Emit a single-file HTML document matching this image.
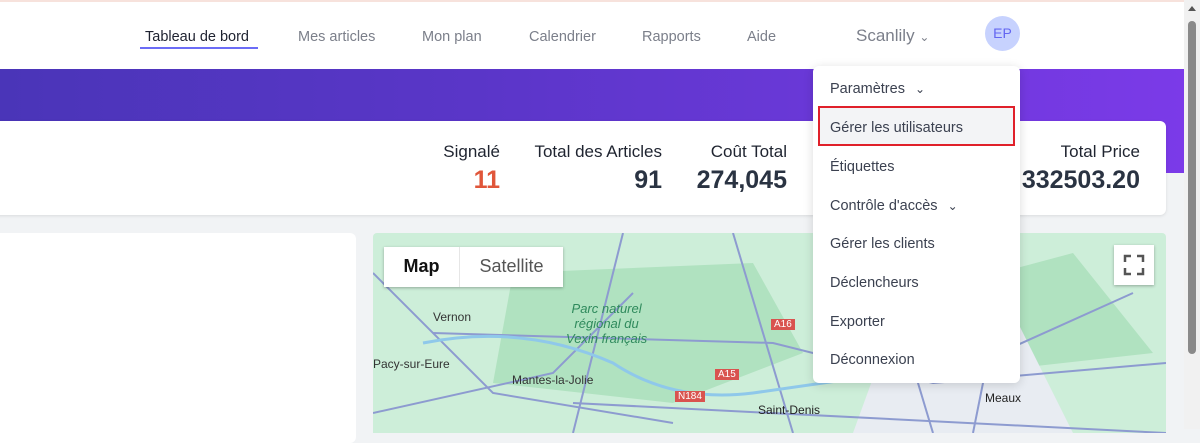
<!DOCTYPE html>
<html><head><meta charset="utf-8"><style>
*{margin:0;padding:0;box-sizing:border-box}
body{width:1200px;height:429px;overflow:hidden;background:#f1f3f5;font-family:"Liberation Sans",sans-serif;position:relative}
.top{position:absolute;left:0;top:0;width:1184px;height:69px;background:#fff;border-top:2px solid #f7e2dc}
.nav{position:absolute;top:27px;font-size:14.5px;color:#7b7f8a}
.banner{position:absolute;left:0;top:69px;width:1184px;height:104px;background:linear-gradient(90deg,#4a35b8,#5a36c8 40%,#7b3ae8)}
.card{position:absolute;background:#fff;border-radius:6px}
.lbl{position:absolute;font-size:17px;color:#1f2430;text-align:right}
.val{position:absolute;font-size:25px;font-weight:bold;color:#2a3342;text-align:right}
.dd{position:absolute;left:813px;top:66px;width:207px;height:317px;background:#fff;border-radius:6px;box-shadow:0 2px 10px rgba(0,0,0,.15)}
.it{position:absolute;left:17px;font-size:14.5px;color:#3b4150}
.scroll{position:absolute;left:1184px;top:0;width:16px;height:429px;background:#f1f1f1}
</style></head><body>
<div class="top">
<div class="nav" style="left:145px;color:#1e2230">Tableau de bord</div>
<div style="position:absolute;left:140px;top:45px;width:118px;height:2px;background:#6b6cf6"></div>
<div class="nav" style="left:298px">Mes articles</div>
<div class="nav" style="left:422px">Mon plan</div>
<div class="nav" style="left:529px">Calendrier</div>
<div class="nav" style="left:642px">Rapports</div>
<div class="nav" style="left:747px">Aide</div>
<div class="nav" style="left:856px;top:24px;font-size:17px">Scanlily <span style="font-size:12px">&#8964;</span></div>
<div style="position:absolute;left:985px;top:14px;width:35px;height:35px;border-radius:50%;background:#c7d2fe;color:#6366f1;font-size:14px;text-align:center;line-height:35px">EP</div>
</div>
<div class="banner"></div>
<div class="card" style="left:-6px;top:121px;width:1172px;height:94px;box-shadow:0 1px 3px rgba(0,0,0,.1)"></div>
<div class="lbl" style="left:400px;width:100px;top:142px">Signalé</div>
<div class="val" style="left:400px;width:100px;top:166px;color:#e0563a">11</div>
<div class="lbl" style="left:500px;width:162px;top:142px">Total des Articles</div>
<div class="val" style="left:500px;width:162px;top:166px">91</div>
<div class="lbl" style="left:660px;width:127px;top:142px">Coût Total</div>
<div class="val" style="left:660px;width:127px;top:166px">274,045</div>
<div class="lbl" style="left:980px;width:160px;top:142px">Total Price</div>
<div class="val" style="left:980px;width:160px;top:166px">332503.20</div>
<div class="card" style="left:-6px;top:233px;width:362px;height:210px"></div>
<div style="position:absolute;left:373px;top:233px;width:793px;height:200px;background:#cdeed9;overflow:hidden;border-radius:4px 4px 0 0">
<svg width="793" height="200" style="position:absolute;left:0;top:0">
<g fill="#b0e2c0"><path d="M140 40 L380 30 L430 120 L300 170 L120 150Z"/><path d="M550 60 L700 20 L780 120 L600 140Z"/></g>
<g fill="#e8ecf2"><path d="M520 90 L640 80 L700 200 L480 200Z"/></g>
<g stroke="#8d9bd0" stroke-width="2" fill="none"><path d="M0 40 L120 160 L300 190"/><path d="M60 100 L400 110 L560 150 L793 130"/><path d="M250 0 L200 200"/><path d="M360 0 L420 200"/><path d="M500 0 L560 200"/><path d="M640 0 L600 200"/><path d="M200 170 L793 200"/><path d="M0 180 L180 140 L260 60"/><path d="M560 150 L760 60"/></g>
<path d="M50 110 Q150 90 240 130 Q300 170 380 160 L520 140" stroke="#8fc8ea" stroke-width="3" fill="none"/>
</svg>
<div style="position:absolute;left:60px;top:77px;font-size:12px;color:#333">Vernon</div>
<div style="position:absolute;left:0;top:124px;font-size:12px;color:#333">Pacy-sur-Eure</div>
<div style="position:absolute;left:139px;top:140px;font-size:12px;color:#333">Mantes-la-Jolie</div>
<div style="position:absolute;left:193px;top:68px;font-size:13px;color:#2f8a5c;font-style:italic;line-height:15px;text-align:center">Parc naturel<br>régional du<br>Vexin français</div>
<div style="position:absolute;left:385px;top:170px;font-size:12px;color:#222">Saint-Denis</div>
<div style="position:absolute;left:612px;top:158px;font-size:12px;color:#222">Meaux</div>
<div style="position:absolute;left:398px;top:86px;background:#d9534f;color:#fff;font-size:10px;padding:0 3px">A16</div>
<div style="position:absolute;left:342px;top:136px;background:#d9534f;color:#fff;font-size:10px;padding:0 3px">A15</div>
<div style="position:absolute;left:302px;top:158px;background:#d9534f;color:#fff;font-size:10px;padding:0 3px">N184</div>
<div style="position:absolute;left:11px;top:14px;width:179px;height:40px;background:#fff;box-shadow:0 1px 3px rgba(0,0,0,.3);font-size:18px">
<div style="position:absolute;left:0;width:75px;text-align:center;top:9px;font-weight:bold;color:#111">Map</div>
<div style="position:absolute;left:75px;top:0;width:1px;height:40px;background:#e6e6e6"></div>
<div style="position:absolute;left:76px;width:103px;text-align:center;top:9px;color:#555">Satellite</div></div>
<div style="position:absolute;left:741px;top:12px;width:40px;height:40px;background:#fff;box-shadow:0 1px 3px rgba(0,0,0,.3)">
<svg width="40" height="40"><g stroke="#555" stroke-width="2.5" fill="none"><path d="M11 17V11H17M23 11H29V17M29 23V29H23M17 29H11V23"/></g></svg></div>
</div>
<div class="dd">
<div class="it" style="top:15px">Paramètres <span style="margin-left:6px;font-size:12px">&#8964;</span></div>
<div style="position:absolute;left:5px;top:40px;width:197px;height:40px;background:#f3f4f6;border:2px solid #e0202a"></div>
<div class="it" style="top:54px">Gérer les utilisateurs</div>
<div class="it" style="top:93px">Étiquettes</div>
<div class="it" style="top:132px">Contrôle d'accès <span style="margin-left:6px;font-size:12px">&#8964;</span></div>
<div class="it" style="top:170px">Gérer les clients</div>
<div class="it" style="top:209px">Déclencheurs</div>
<div class="it" style="top:248px">Exporter</div>
<div class="it" style="top:286px">Déconnexion</div>
</div>
<div class="scroll"><div style="position:absolute;left:4px;top:21px;width:8px;height:333px;background:#8a8a8a;border-radius:4px"></div>
<div style="position:absolute;left:4px;top:6px;border:4px solid transparent;border-bottom:5px solid #555;border-top:0"></div></div>
</body></html>
